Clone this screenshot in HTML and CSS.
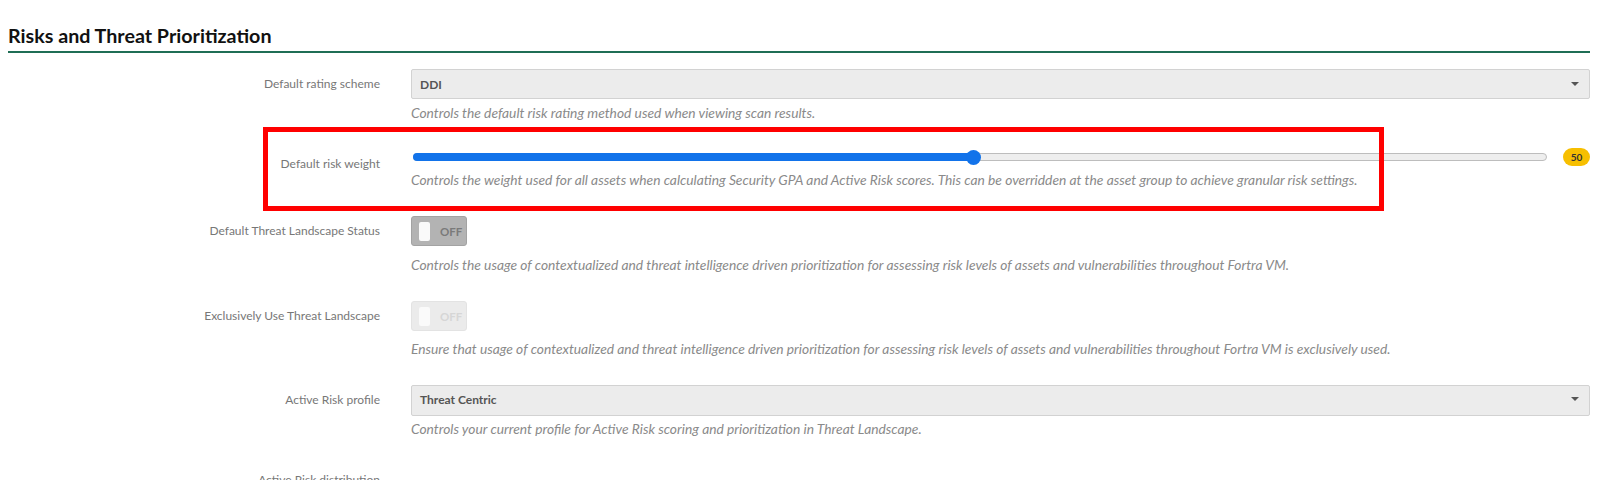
FILE: index.html
```html
<!DOCTYPE html>
<html>
<head>
<meta charset="utf-8">
<link rel="stylesheet" href="styles.css">
</head>
<body>
<div class="page">
  <h2 class="section-title">Risks and Threat Prioritization</h2>
  <div class="form">
    <div class="row">
      <div class="label">Default rating scheme</div>
      <div class="field">
        <div class="select select-a"><span class="select-value">DDI</span><span class="caret"></span></div>
        <p class="help help-a">Controls the default risk rating method used when viewing scan results.</p>
      </div>
    </div>
    <div class="row">
      <div class="label">Default risk weight</div>
      <div class="field">
        <div class="slider">
          <div class="track">
            <div class="fill" style="width: 49.6%"></div>
            <div class="thumb" style="left: 49.6%"></div>
          </div>
          <span class="badge">50</span>
        </div>
        <p class="help help-s">Controls the weight used for all assets when calculating Security GPA and Active Risk scores. This can be overridden at the asset group to achieve granular risk settings.</p>
      </div>
    </div>
    <div class="row">
      <div class="label">Default Threat Landscape Status</div>
      <div class="field">
        <div class="toggle"><span class="knob"></span><span class="toggle-text">OFF</span></div>
        <p class="help help-t1">Controls the usage of contextualized and threat intelligence driven prioritization for assessing risk levels of assets and vulnerabilities throughout Fortra VM.</p>
      </div>
    </div>
    <div class="row">
      <div class="label">Exclusively Use Threat Landscape</div>
      <div class="field">
        <div class="toggle toggle-disabled"><span class="knob"></span><span class="toggle-text">OFF</span></div>
        <p class="help help-t2">Ensure that usage of contextualized and threat intelligence driven prioritization for assessing risk levels of assets and vulnerabilities throughout Fortra VM is exclusively used.</p>
      </div>
    </div>
    <div class="row">
      <div class="label">Active Risk profile</div>
      <div class="field">
        <div class="select select-b"><span class="select-value">Threat Centric</span><span class="caret"></span></div>
        <p class="help help-b">Controls your current profile for Active Risk scoring and prioritization in Threat Landscape.</p>
      </div>
    </div>
    <div class="row">
      <div class="label">Active Risk distribution</div>
      <div class="field"></div>
    </div>
  </div>
</div>
<div class="highlight"></div>
</body>
</html>
```

FILE: styles.css
```css
html, body {
  margin: 0;
  padding: 0;
  background: #ffffff;
  overflow: hidden;
}
body {
  font-family: Lato, "Noto Sans", sans-serif;
  color: #333;
}
.page {
  padding: 25px 15px 0 8px;
}
.section-title {
  margin: 0;
  font-size: 19.7px;
  line-height: 22px;
  font-weight: 700;
  color: #111;
  padding-bottom: 4px;
  border-bottom: 2px solid #1f6e55;
}
.form {
  display: flex;
  flex-direction: column;
  gap: 28px;
  margin-top: 16px;
}
.row {
  display: grid;
  grid-template-columns: 372px 1fr;
  column-gap: 31px;
}
.label {
  text-align: right;
  font-size: 12px;
  line-height: 16px;
  padding-top: 7px;
  color: #777;
}
.field {
  min-width: 0;
}
.select {
  box-sizing: border-box;
  display: flex;
  align-items: center;
  justify-content: space-between;
  background: #ececec;
  border: 1px solid #d2d2d2;
  border-radius: 2px;
  padding: 0 10px 0 8px;
}
.select-a { height: 30px; }
.select-b { height: 31px; padding-bottom: 3px; }
.select-value {
  font-size: 12px;
  font-weight: 700;
  color: #555;
}
.caret {
  width: 0;
  height: 0;
  border-left: 4px solid transparent;
  border-right: 4px solid transparent;
  border-top: 4px solid #555;
}
.help {
  margin: 0;
  font-size: 13.8px;
  line-height: 16px;
  font-style: italic;
  color: #8a8a8a;
}
.help-a { margin-top: 6px; }
.help-s { margin-top: 7px; }
.help-t1 { margin-top: 11px; }
.help-t2 { margin-top: 10px; }
.help-b { margin-top: 5px; }

.slider {
  display: flex;
  align-items: center;
  height: 16px;
  padding-left: 2px;
}
.track {
  position: relative;
  flex: 1;
  height: 8px;
  box-sizing: border-box;
  background: #eeeeee;
  border: 1px solid #bdbdbd;
  border-radius: 4px;
}
.fill {
  position: absolute;
  left: -1px;
  top: -1px;
  bottom: -1px;
  background: #1273ea;
  border-radius: 4px 0 0 4px;
}
.thumb {
  position: absolute;
  top: 50%;
  width: 15px;
  height: 15px;
  margin-left: -9px;
  margin-top: -7.5px;
  background: #1273ea;
  border-radius: 50%;
}
.badge {
  margin-left: 16px;
  width: 27px;
  height: 18px;
  line-height: 18px;
  text-align: center;
  border-radius: 9px;
  background: #f7bf00;
  color: #333;
  font-size: 10px;
  font-weight: 700;
}
.toggle {
  box-sizing: border-box;
  width: 56px;
  height: 30px;
  display: flex;
  align-items: center;
  padding-left: 7px;
  background: #b3b3b3;
  border: 1px solid #a3a3a3;
  border-radius: 3px;
}
.knob {
  width: 11px;
  height: 19px;
  background: #fafafa;
  border-radius: 2px;
}
.toggle-text {
  margin-left: 10px;
  font-size: 11.5px;
  font-weight: 700;
  color: #7a7a7a;
}
.toggle-disabled {
  background: #ebebeb;
  border-color: #e3e3e3;
}
.toggle-disabled .toggle-text {
  color: #d6d6d6;
}
.highlight {
  position: absolute;
  left: 263px;
  top: 127px;
  width: 1121px;
  height: 84px;
  box-sizing: border-box;
  border: 5px solid #ff0000;
}
```
